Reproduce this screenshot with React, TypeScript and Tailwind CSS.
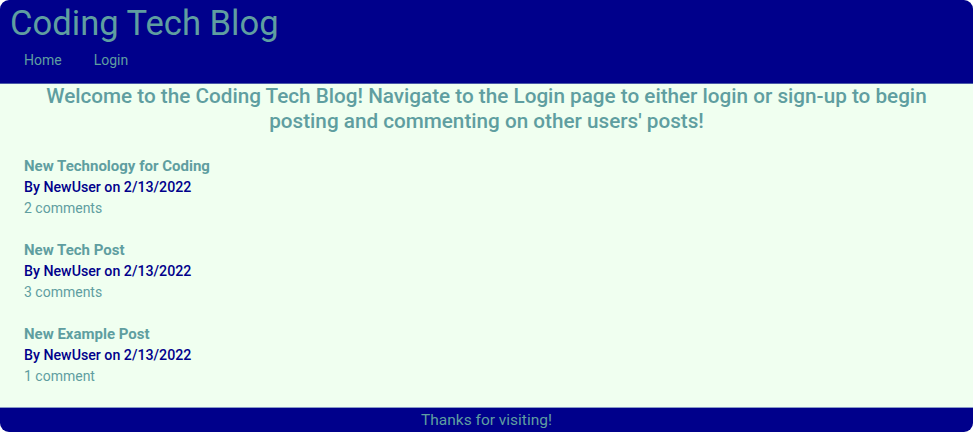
const posts = [
  { title: 'New Technology for Coding', author: 'NewUser', date: '2/13/2022', comments: '2 comments' },
  { title: 'New Tech Post', author: 'NewUser', date: '2/13/2022', comments: '3 comments' },
  { title: 'New Example Post', author: 'NewUser', date: '2/13/2022', comments: '1 comment' },
];

export default function App() {
  return (
    <div className="w-[977px] h-[433px] bg-white font-['Roboto',sans-serif]">
      <div className="w-[973px] h-[432px] rounded-[9px] overflow-hidden bg-[#f0fff0] flex flex-col">
        {/* Header */}
        <header className="h-[84px] bg-[#00008b] border-b border-[#4a5aa8] shrink-0">
          <h1 className="text-[34.6px] leading-[44px] text-[#5f9ea0] pl-[10px] pt-[1px]">
            Coding Tech Blog
          </h1>
          <nav className="flex gap-[32px] pl-[24px] pt-[3px] text-[14px] leading-[24px] text-[#5f9ea0]">
            <a>Home</a>
            <a>Login</a>
          </nav>
        </header>

        {/* Main */}
        <main className="flex-1">
          <h2 className="text-center text-[20.7px] leading-[25px] font-medium text-[#5f9ea0] px-[20px]">
            Welcome to the Coding Tech Blog! Navigate to the Login page to either login or sign-up to begin posting and commenting on other users' posts!
          </h2>
          <div className="pl-[24px] pt-[22px] flex flex-col gap-[21px]">
            {posts.map((p) => (
              <div key={p.title} className="leading-[21px]">
                <div className="text-[15px] font-bold text-[#5f9ea0]">{p.title}</div>
                <div className="text-[14.2px] font-medium text-[#00008b]">
                  By {p.author} on {p.date}
                </div>
                <div className="text-[14px] text-[#5f9ea0]">{p.comments}</div>
              </div>
            ))}
          </div>
        </main>

        {/* Footer */}
        <footer className="h-[25px] bg-[#00008b] border-t border-[#8a9ac8] text-center text-[#5f9ea0] text-[15.5px] leading-[24px] shrink-0">
          Thanks for visiting!
        </footer>
      </div>
    </div>
  );
}
